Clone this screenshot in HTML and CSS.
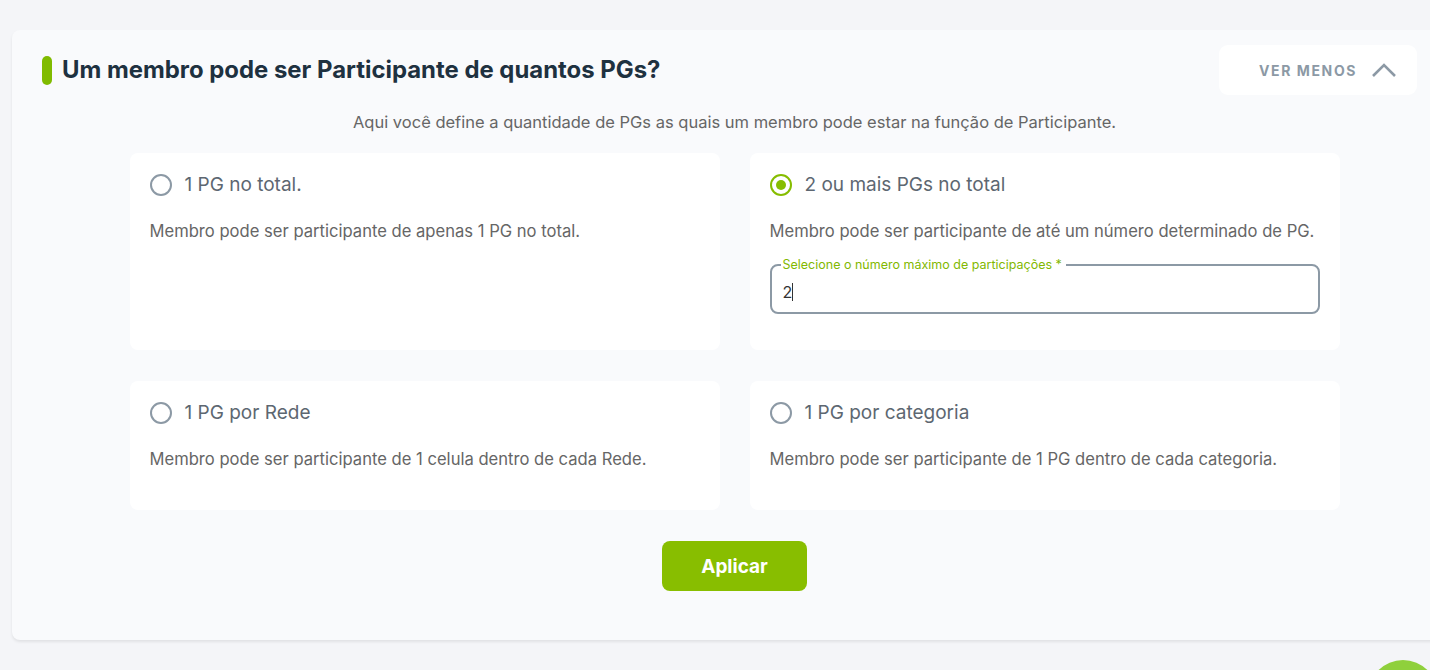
FILE: index.html
```html
<!DOCTYPE html>
<html lang="pt-BR">
  <head>
    <meta charset="UTF-8" />
    <meta name="viewport" content="width=device-width, initial-scale=1.0" />
    <title>Configuração de PGs</title>
    <link rel="stylesheet" href="styles.css">
  </head>
  <body>
    <section class="panel">
      <div class="panel-head">
        <h1 class="panel-title"><span class="title-bar"></span>Um membro pode ser Participante de quantos PGs?</h1>
        <button class="toggle-btn" type="button">
          VER MENOS
          <svg width="26" height="16" viewBox="0 0 26 16">
            <path d="M2 14 L13 3 L24 14" fill="none" stroke="#8c99a5" stroke-width="2.6" />
          </svg>
        </button>
      </div>
      <p class="panel-desc">Aqui você define a quantidade de PGs as quais um membro pode estar na função de Participante.</p>

      <div class="options">
        <label class="option">
          <span class="option-head"><span class="radio"></span>1 PG no total.</span>
          <span class="option-text">Membro pode ser participante de apenas 1 PG no total.</span>
        </label>
        <label class="option">
          <span class="option-head"><span class="radio checked"></span>2 ou mais PGs no total</span>
          <span class="option-text">Membro pode ser participante de até um número determinado de PG.</span>
          <span class="field">
            <span class="field-label">Selecione o número máximo de participações *</span>
            <span class="field-value">2<span class="caret"></span></span>
          </span>
        </label>
        <label class="option">
          <span class="option-head"><span class="radio"></span>1 PG por Rede</span>
          <span class="option-text">Membro pode ser participante de 1 celula dentro de cada Rede.</span>
        </label>
        <label class="option">
          <span class="option-head"><span class="radio"></span>1 PG por categoria</span>
          <span class="option-text">Membro pode ser participante de 1 PG dentro de cada categoria.</span>
        </label>
      </div>

      <div class="actions">
        <button class="apply-btn" type="button">Aplicar</button>
      </div>
    </section>
    <div class="fab"></div>
  </body>
</html>
```

FILE: styles.css
```css
body {
  margin: 0;
  padding: 30px 0 0 12px;
  background-color: #f4f5f8;
  font-family: "Inter", "Lato", sans-serif;
  overflow: hidden;
  height: 670px;
  box-sizing: border-box;
}
.panel {
  width: 1445px;
  height: 610px;
  box-sizing: border-box;
  background: #f9fafc;
  border-radius: 8px;
  box-shadow: 0 2px 3px rgba(0, 0, 0, 0.08);
  padding: 15px 0 0;
}
.panel-head {
  display: flex;
  justify-content: space-between;
  align-items: flex-start;
  padding: 0 40px 0 30px;
  width: 1375px;
}
.panel-title {
  display: flex;
  align-items: center;
  gap: 10px;
  margin: 10px 0 0;
  font-size: 23.9px;
  line-height: 30px;
  font-weight: 700;
  color: #1e3140;
}
.title-bar {
  width: 10px;
  height: 29px;
  border-radius: 5px;
  background: #80bb00;
}
.toggle-btn {
  display: flex;
  align-items: center;
  gap: 14px;
  width: 198px;
  height: 50px;
  padding: 0 0 0 40px;
  border: none;
  border-radius: 9px;
  background: #fff;
  color: #8c99a5;
  font-family: inherit;
  font-size: 14px;
  font-weight: 700;
  letter-spacing: 1.6px;
  cursor: pointer;
}
.panel-desc {
  margin: 17px 0 0;
  text-align: center;
  font-size: 16.5px;
  color: #666;
}
.options {
  display: grid;
  grid-template-columns: 590px 590px;
  grid-template-rows: 197px 129px;
  column-gap: 30px;
  row-gap: 31px;
  justify-content: center;
  margin-top: 21px;
}
.option {
  display: flex;
  flex-direction: column;
  background: #fff;
  border-radius: 8px;
  padding: 20px 20px 0;
  cursor: pointer;
}
.option-head {
  display: flex;
  align-items: center;
  gap: 13px;
  font-size: 19px;
  line-height: 24px;
  color: #5d6771;
}
.radio {
  width: 18px;
  height: 18px;
  border: 2px solid #8c99a5;
  border-radius: 50%;
  flex-shrink: 0;
}
.radio.checked {
  border-color: #86bd00;
  position: relative;
}
.radio.checked::after {
  content: "";
  position: absolute;
  left: 4px;
  top: 4px;
  width: 10px;
  height: 10px;
  border-radius: 50%;
  background: #86bd00;
}
.option-text {
  margin-top: 24px;
  font-size: 16.6px;
  line-height: 20px;
  color: #666;
}
.field {
  position: relative;
  display: flex;
  align-items: center;
  margin-top: 23px;
  padding: 0 11px;
  height: 50px;
  box-sizing: border-box;
  border: 2px solid #8c99a5;
  border-radius: 8px;
}
.field-label {
  position: absolute;
  left: 9px;
  top: -9px;
  padding: 0 4px 0 2px;
  background: #fff;
  font-size: 12.5px;
  line-height: 16px;
  color: #82b800;
}
.field-value {
  display: flex;
  align-items: center;
  font-size: 16px;
  color: #333;
  margin-top: 6px;
}
.caret {
  width: 1px;
  height: 18px;
  background: #333;
}
.actions {
  display: flex;
  justify-content: center;
  margin-top: 31px;
}
.apply-btn {
  width: 145px;
  height: 50px;
  border: none;
  border-radius: 8px;
  background: #88be00;
  color: #fff;
  font-family: inherit;
  font-size: 19px;
  font-weight: 700;
  cursor: pointer;
}
.fab {
  position: fixed;
  left: 1368px;
  top: 660px;
  width: 70px;
  height: 70px;
  border-radius: 50%;
  background: #8fd03c;
}
```
